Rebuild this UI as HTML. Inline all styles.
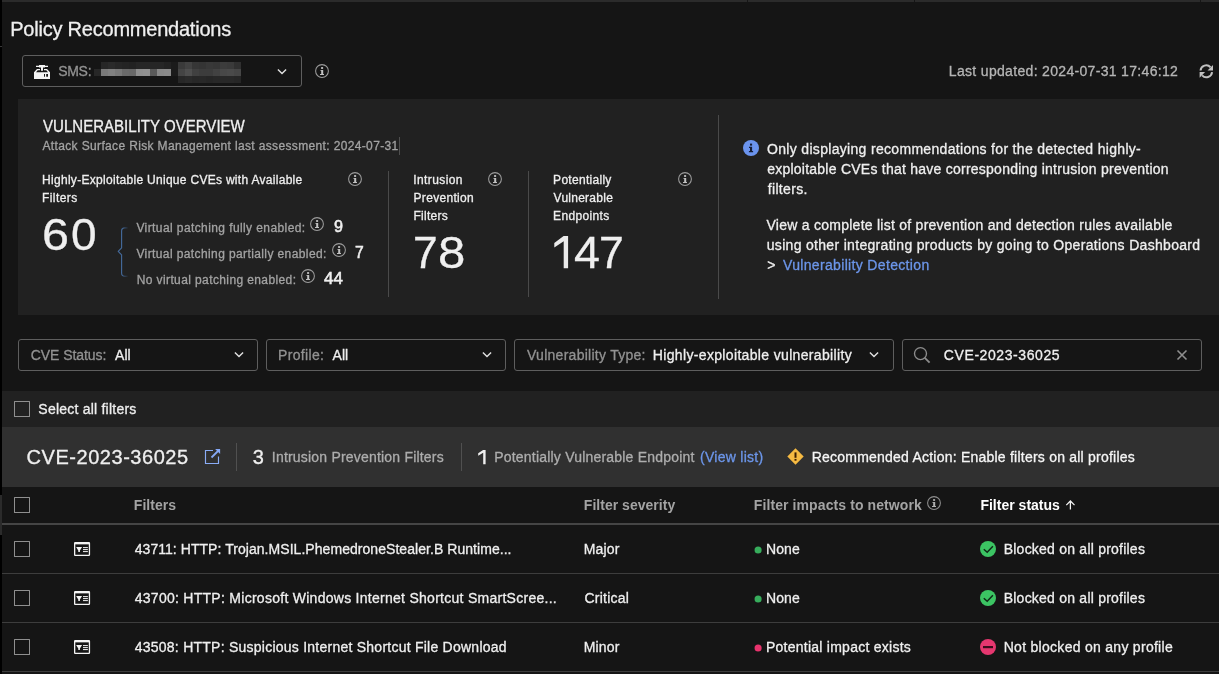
<!DOCTYPE html>
<html lang="en"><head><meta charset="utf-8"><title>Policy Recommendations</title>
<style>
html,body{margin:0;padding:0;}
body{width:1219px;height:674px;overflow:hidden;position:relative;background:#151515;font-family:"Liberation Sans",sans-serif;color:#ebebeb;}
.a{position:absolute;}
.t{position:absolute;white-space:nowrap;margin:0;padding:0;font-weight:400;}
.box{position:absolute;box-sizing:border-box;border:1px solid #5e5e5e;border-radius:3px;height:32px;}
.cb{position:absolute;box-sizing:border-box;width:16px;height:16px;border:1px solid #8f8f8f;border-radius:0.5px;left:14px;}
.vd{position:absolute;width:1px;background:#4a4a4a;}
.hl{position:absolute;left:2px;right:0;height:1px;background:#3d3d3d;}
svg{position:absolute;overflow:visible;}
.tl{position:absolute;left:0;top:0;width:1219px;height:674px;will-change:transform;-webkit-text-stroke:0.3px currentColor;}
</style></head>
<body>
<!-- window chrome strips -->
<div class="a" style="left:0;top:0;width:2px;height:674px;background:#000"></div>
<div class="a" style="left:0;top:495px;width:2px;height:40px;background:#2b2b2b"></div>
<div class="a" style="left:0;top:46px;width:2px;height:1px;background:#3a3a3a"></div>
<div class="a" style="left:2px;top:0;right:0;height:2px;background:#2b2b2b"></div>
<div class="a" style="left:747px;top:0;width:1px;height:2px;background:#161616"></div>
<div class="a" style="left:914px;top:0;width:1px;height:2px;background:#161616"></div>
<div class="a" style="left:1200px;top:0;width:1px;height:2px;background:#161616"></div>
<!-- header: SMS selector, info, refresh -->
<div class="box" style="left:22px;top:55px;width:280px;"></div>
<svg class="a" style="left:34px;top:65px" width="16" height="14" viewBox="0 0 16 14"><path d="M0 7.3L3 4H6V5.2H3.7L2 7.2H14L12.3 5.2H10V4H13L16 7.3V14H0Z" fill="#f4f4f4"/><path d="M2 0.8H5V0H11V0.8H14V2H11V2.6H9V5.8H7V2.6H5V2H2Z" fill="#f4f4f4"/><rect x="10" y="9" width="1" height="2.7" fill="#151515"/><rect x="12.2" y="9" width="1.8" height="2.7" fill="#151515"/></svg>
<div class="a" style="left:101px;top:62px;width:7px;height:7px;background:#262626"></div><div class="a" style="left:108px;top:62px;width:7px;height:7px;background:#2a2a2a"></div><div class="a" style="left:115px;top:62px;width:7px;height:7px;background:#262626"></div><div class="a" style="left:122px;top:62px;width:7px;height:7px;background:#242424"></div><div class="a" style="left:129px;top:62px;width:7px;height:7px;background:#222"></div><div class="a" style="left:136px;top:62px;width:7px;height:7px;background:#262626"></div><div class="a" style="left:143px;top:62px;width:7px;height:7px;background:#262626"></div><div class="a" style="left:150px;top:62px;width:7px;height:7px;background:#262626"></div><div class="a" style="left:157px;top:62px;width:7px;height:7px;background:#262626"></div><div class="a" style="left:164px;top:62px;width:7px;height:7px;background:#222"></div><div class="a" style="left:101px;top:69px;width:7px;height:7px;background:#7a7a7a"></div><div class="a" style="left:108px;top:69px;width:7px;height:7px;background:#808080"></div><div class="a" style="left:115px;top:69px;width:7px;height:7px;background:#787878"></div><div class="a" style="left:122px;top:69px;width:7px;height:7px;background:#6a6a6a"></div><div class="a" style="left:129px;top:69px;width:7px;height:7px;background:#686868"></div><div class="a" style="left:136px;top:69px;width:7px;height:7px;background:#8e8e8e"></div><div class="a" style="left:143px;top:69px;width:7px;height:7px;background:#909090"></div><div class="a" style="left:150px;top:69px;width:7px;height:7px;background:#5a5a5a"></div><div class="a" style="left:157px;top:69px;width:7px;height:7px;background:#888"></div><div class="a" style="left:164px;top:69px;width:7px;height:7px;background:#8a8a8a"></div><div class="a" style="left:94px;top:69px;width:7px;height:7px;background:#272727"></div><div class="a" style="left:171px;top:62px;width:7px;height:14px;background:#1b1b1b"></div><div class="a" style="left:178px;top:62px;width:7px;height:7px;background:#3a3a3a"></div><div class="a" style="left:185px;top:62px;width:7px;height:7px;background:#424242"></div><div class="a" style="left:192px;top:62px;width:7px;height:7px;background:#363636"></div><div class="a" style="left:199px;top:62px;width:7px;height:7px;background:#343434"></div><div class="a" style="left:206px;top:62px;width:7px;height:7px;background:#383838"></div><div class="a" style="left:213px;top:62px;width:7px;height:7px;background:#363636"></div><div class="a" style="left:220px;top:62px;width:7px;height:7px;background:#3c3c3c"></div><div class="a" style="left:227px;top:62px;width:7px;height:7px;background:#3a3a3a"></div><div class="a" style="left:234px;top:62px;width:7px;height:7px;background:#303030"></div><div class="a" style="left:178px;top:69px;width:7px;height:7px;background:#444"></div><div class="a" style="left:185px;top:69px;width:7px;height:7px;background:#4e4e4e"></div><div class="a" style="left:192px;top:69px;width:7px;height:7px;background:#404040"></div><div class="a" style="left:199px;top:69px;width:7px;height:7px;background:#3c3c3c"></div><div class="a" style="left:206px;top:69px;width:7px;height:7px;background:#3c3c3c"></div><div class="a" style="left:213px;top:69px;width:7px;height:7px;background:#424242"></div><div class="a" style="left:220px;top:69px;width:7px;height:7px;background:#484848"></div><div class="a" style="left:227px;top:69px;width:7px;height:7px;background:#4a4a4a"></div><div class="a" style="left:234px;top:69px;width:7px;height:7px;background:#464646"></div><div class="a" style="left:178px;top:76px;width:7px;height:7px;background:#272727"></div><div class="a" style="left:185px;top:76px;width:7px;height:7px;background:#2a2a2a"></div><div class="a" style="left:192px;top:76px;width:7px;height:7px;background:#272727"></div><div class="a" style="left:199px;top:76px;width:7px;height:7px;background:#282828"></div><div class="a" style="left:206px;top:76px;width:7px;height:7px;background:#262626"></div><div class="a" style="left:213px;top:76px;width:7px;height:7px;background:#282828"></div><div class="a" style="left:220px;top:76px;width:7px;height:7px;background:#282828"></div><div class="a" style="left:227px;top:76px;width:7px;height:7px;background:#282828"></div><div class="a" style="left:234px;top:76px;width:7px;height:7px;background:#262626"></div>
<svg class="a" style="left:276.3px;top:67.9px" width="12" height="8" viewBox="0 0 12 8"><path d="M1.9 1.5L6 5.6L10.1 1.5" fill="none" stroke="#e0e0e0" stroke-width="1.4"/></svg>
<svg class="a" style="left:315px;top:64px" width="14" height="14" viewBox="0 0 14 14"><circle cx="7" cy="7" r="6.4" fill="none" stroke="#9c9c9c" stroke-width="1.05"/><rect x="6.1" y="3.1" width="2" height="1.8" fill="#c2c2c2"/><path d="M5.4 5.9H8.2V10H9V11H5V10H6.2V6.8H5.4Z" fill="#c2c2c2"/></svg>
<svg class="a" style="left:1199px;top:64px" width="14.6" height="14.6" viewBox="0 0 14.6 14.6"><path d="M1.5 6.5A5.8 5.8 0 0 1 11.5 3.2" fill="none" stroke="#c0c0c0" stroke-width="2"/><path d="M14 0.9V6.6H8.5Z" fill="#c0c0c0"/><path d="M13.1 8.1A5.8 5.8 0 0 1 3.1 11.4" fill="none" stroke="#c0c0c0" stroke-width="2"/><path d="M0.6 13.7V8H6.1Z" fill="#c0c0c0"/></svg>
<!-- vulnerability overview panel -->
<div class="a" style="left:18px;top:99px;right:0;height:216px;background:#212121"></div>
<div class="a hc" style="left:399px;top:137px;width:1px;height:18px;background:#4f4f4f"></div>
<div class="vd" style="left:388px;top:171px;height:126px"></div>
<div class="vd" style="left:528px;top:171px;height:126px"></div>
<div class="vd" style="left:718px;top:115px;height:184px"></div>
<svg class="a" style="left:347.7px;top:172.3px" width="14" height="14" viewBox="0 0 14 14"><circle cx="7" cy="7" r="6.4" fill="none" stroke="#9c9c9c" stroke-width="1.05"/><rect x="6.1" y="3.1" width="2" height="1.8" fill="#c2c2c2"/><path d="M5.4 5.9H8.2V10H9V11H5V10H6.2V6.8H5.4Z" fill="#c2c2c2"/></svg>
<svg class="a" style="left:487.8px;top:172.3px" width="14" height="14" viewBox="0 0 14 14"><circle cx="7" cy="7" r="6.4" fill="none" stroke="#9c9c9c" stroke-width="1.05"/><rect x="6.1" y="3.1" width="2" height="1.8" fill="#c2c2c2"/><path d="M5.4 5.9H8.2V10H9V11H5V10H6.2V6.8H5.4Z" fill="#c2c2c2"/></svg>
<svg class="a" style="left:677.9px;top:172.3px" width="14" height="14" viewBox="0 0 14 14"><circle cx="7" cy="7" r="6.4" fill="none" stroke="#9c9c9c" stroke-width="1.05"/><rect x="6.1" y="3.1" width="2" height="1.8" fill="#c2c2c2"/><path d="M5.4 5.9H8.2V10H9V11H5V10H6.2V6.8H5.4Z" fill="#c2c2c2"/></svg>
<svg class="a" style="left:309.8px;top:217.2px" width="14" height="14" viewBox="0 0 14 14"><circle cx="7" cy="7" r="6.4" fill="none" stroke="#9c9c9c" stroke-width="1.05"/><rect x="6.1" y="3.1" width="2" height="1.8" fill="#c2c2c2"/><path d="M5.4 5.9H8.2V10H9V11H5V10H6.2V6.8H5.4Z" fill="#c2c2c2"/></svg>
<svg class="a" style="left:332px;top:243px" width="14" height="14" viewBox="0 0 14 14"><circle cx="7" cy="7" r="6.4" fill="none" stroke="#9c9c9c" stroke-width="1.05"/><rect x="6.1" y="3.1" width="2" height="1.8" fill="#c2c2c2"/><path d="M5.4 5.9H8.2V10H9V11H5V10H6.2V6.8H5.4Z" fill="#c2c2c2"/></svg>
<svg class="a" style="left:300.7px;top:268.8px" width="14" height="14" viewBox="0 0 14 14"><circle cx="7" cy="7" r="6.4" fill="none" stroke="#9c9c9c" stroke-width="1.05"/><rect x="6.1" y="3.1" width="2" height="1.8" fill="#c2c2c2"/><path d="M5.4 5.9H8.2V10H9V11H5V10H6.2V6.8H5.4Z" fill="#c2c2c2"/></svg>
<svg class="a" style="left:117px;top:227px" width="12" height="50" viewBox="0 0 12 50"><defs><linearGradient id="bg" gradientUnits="userSpaceOnUse" x1="5" y1="0" x2="11" y2="0"><stop offset="0" stop-color="#43699a"/><stop offset="1" stop-color="#43699a" stop-opacity="0.1"/></linearGradient></defs><path d="M10.8 0.9H7.8Q4.6 0.9 4.6 4V20.8L1.2 24.3L4.6 27.8V46Q4.6 49.2 7.8 49.2H10.8" fill="none" stroke="url(#bg)" stroke-width="1.15" stroke-linejoin="round"/></svg>
<svg class="a" style="left:554.3px;top:235.9px" width="15" height="33" viewBox="0 0 15 33"><path d="M9.6 0H14.1V32.2H9.7V5.2L0.3 11.4V7Z" fill="#ebebeb"/></svg>
<svg class="a" style="left:742.6px;top:139.5px" width="16" height="16" viewBox="0 0 16 16"><circle cx="8" cy="8" r="8" fill="#6b94ee"/><rect x="7" y="3.6" width="2.1" height="2" fill="#151c33"/><path d="M6 6.8H9.1V11H10.1V12.2H5.9V11H7V8H6Z" fill="#151c33"/></svg>
<!-- filter bar -->
<div class="box" style="left:18px;top:339px;width:240px;"></div>
<div class="box" style="left:266px;top:339px;width:240px;"></div>
<div class="box" style="left:514px;top:339px;width:380px;"></div>
<div class="box" style="left:902px;top:339px;width:300px;"></div>
<svg class="a" style="left:232.5px;top:351px" width="12" height="8" viewBox="0 0 12 8"><path d="M1.9 1.5L6 5.6L10.1 1.5" fill="none" stroke="#e0e0e0" stroke-width="1.4"/></svg>
<svg class="a" style="left:480.5px;top:351px" width="12" height="8" viewBox="0 0 12 8"><path d="M1.9 1.5L6 5.6L10.1 1.5" fill="none" stroke="#e0e0e0" stroke-width="1.4"/></svg>
<svg class="a" style="left:867.5px;top:351px" width="12" height="8" viewBox="0 0 12 8"><path d="M1.9 1.5L6 5.6L10.1 1.5" fill="none" stroke="#e0e0e0" stroke-width="1.4"/></svg>
<svg class="a" style="left:913px;top:346px" width="18" height="18" viewBox="0 0 18 18"><circle cx="7.5" cy="7.6" r="6" fill="none" stroke="#8c8c8c" stroke-width="1.35"/><path d="M11.8 11.9L16.6 16.7" stroke="#8c8c8c" stroke-width="1.8"/></svg>
<svg class="a" style="left:1177px;top:350px" width="10" height="10" viewBox="0 0 10 10"><path d="M0.5 0.5L9.5 9.5M9.5 0.5L0.5 9.5" stroke="#8f8f8f" stroke-width="1.6"/></svg>
<!-- select-all row and CVE group header -->
<div class="a" style="left:2px;top:391px;right:0;height:36px;background:#212121"></div>
<div class="cb" style="top:401px;"></div>
<div class="a" style="left:2px;top:427px;right:0;height:60px;background:#303030"></div>
<svg class="a" style="left:204px;top:448px" width="17" height="17" viewBox="0 0 17 17"><path d="M9 2.5H1.5V15.5H14.5V8.5" fill="none" stroke="#8aacf6" stroke-width="1.15"/><path d="M7.5 9.5L14.5 2.5" stroke="#86a9f7" stroke-width="1.8"/><path d="M11.1 1H16.1V6Z" fill="#86a9f7"/></svg>
<div class="vd" style="left:236px;top:443px;height:28px;background:#505050"></div>
<div class="vd" style="left:461px;top:443px;height:28px;background:#505050"></div>
<svg class="a" style="left:787.1px;top:448px" width="17" height="17" viewBox="0 0 17 17"><path d="M8.5 0.3L16.7 8.5L8.5 16.7L0.3 8.5Z" fill="#f6ba42"/><rect x="7.5" y="4.4" width="2" height="5.4" fill="#3d1f00"/><rect x="7.5" y="10.9" width="2" height="1.8" fill="#3d1f00"/></svg>
<svg class="a" style="left:478px;top:449.6px" width="8" height="15" viewBox="0 0 8 15"><path d="M5.1 0H7.6V14.3H5.2V2.7L0.2 5.8V3.3Z" fill="#efefef"/></svg>
<!-- filters table -->
<div class="cb" style="top:497px;"></div>
<div class="a" style="left:2px;top:523px;right:0;height:2px;background:#454545"></div>
<svg class="a" style="left:927px;top:496px" width="14" height="14" viewBox="0 0 14 14"><circle cx="7" cy="7" r="6.4" fill="none" stroke="#8e8e8e" stroke-width="1.05"/><rect x="6.1" y="3.1" width="2" height="1.8" fill="#b0b0b0"/><path d="M5.4 5.9H8.2V10H9V11H5V10H6.2V6.8H5.4Z" fill="#b0b0b0"/></svg>
<svg class="a" style="left:1064px;top:498px" width="12" height="13" viewBox="0 0 12 13"><path d="M6.4 11.6V3.2M2.3 7.1L6.4 3L10.5 7.1" fill="none" stroke="#f2f2f2" stroke-width="1.25"/></svg>
<div class="cb" style="top:541px;"></div>
<svg class="a" style="left:73.8px;top:542px" width="16.1" height="14" viewBox="0 0 16.1 14"><rect x="0.65" y="0.65" width="14.8" height="12.7" rx="0.6" fill="none" stroke="#f4f4f4" stroke-width="1.3"/><rect x="0.65" y="0.65" width="14.8" height="1.7" fill="#f4f4f4"/><path d="M2.1 5H8.1L5.9 8.5V10H4.3V8.5Z" fill="#f4f4f4"/><path d="M9 5.6H13.9M9 7.6H13.9M9 9.6H13.9" stroke="#f4f4f4" stroke-width="1"/></svg>
<div class="hl" style="top:573px"></div>
<svg class="a" style="left:754px;top:546px" width="8" height="8" viewBox="0 0 8 8"><circle cx="4.1" cy="4" r="3.55" fill="#37ad5c"/></svg>
<svg class="a" style="left:980px;top:541px" width="16" height="16" viewBox="0 0 16 16"><circle cx="8" cy="8" r="8" fill="#3cc463"/><path d="M3.8 8.2L7.2 11.3L12.9 5.3" fill="none" stroke="#0f2a18" stroke-width="1.5"/></svg>
<div class="cb" style="top:590px;"></div>
<svg class="a" style="left:73.8px;top:591px" width="16.1" height="14" viewBox="0 0 16.1 14"><rect x="0.65" y="0.65" width="14.8" height="12.7" rx="0.6" fill="none" stroke="#f4f4f4" stroke-width="1.3"/><rect x="0.65" y="0.65" width="14.8" height="1.7" fill="#f4f4f4"/><path d="M2.1 5H8.1L5.9 8.5V10H4.3V8.5Z" fill="#f4f4f4"/><path d="M9 5.6H13.9M9 7.6H13.9M9 9.6H13.9" stroke="#f4f4f4" stroke-width="1"/></svg>
<div class="hl" style="top:622px"></div>
<svg class="a" style="left:754px;top:595px" width="8" height="8" viewBox="0 0 8 8"><circle cx="4.1" cy="4" r="3.55" fill="#37ad5c"/></svg>
<svg class="a" style="left:980px;top:590px" width="16" height="16" viewBox="0 0 16 16"><circle cx="8" cy="8" r="8" fill="#3cc463"/><path d="M3.8 8.2L7.2 11.3L12.9 5.3" fill="none" stroke="#0f2a18" stroke-width="1.5"/></svg>
<div class="cb" style="top:639px;"></div>
<svg class="a" style="left:73.8px;top:640px" width="16.1" height="14" viewBox="0 0 16.1 14"><rect x="0.65" y="0.65" width="14.8" height="12.7" rx="0.6" fill="none" stroke="#f4f4f4" stroke-width="1.3"/><rect x="0.65" y="0.65" width="14.8" height="1.7" fill="#f4f4f4"/><path d="M2.1 5H8.1L5.9 8.5V10H4.3V8.5Z" fill="#f4f4f4"/><path d="M9 5.6H13.9M9 7.6H13.9M9 9.6H13.9" stroke="#f4f4f4" stroke-width="1"/></svg>
<div class="hl" style="top:671px"></div>
<svg class="a" style="left:754px;top:644px" width="8" height="8" viewBox="0 0 8 8"><circle cx="4.1" cy="4" r="3.55" fill="#e8336d"/></svg>
<svg class="a" style="left:980px;top:639px" width="16" height="16" viewBox="0 0 16 16"><circle cx="8" cy="8" r="8" fill="#e5376f"/><rect x="3" y="7" width="10" height="2.2" fill="#3a0d1c"/></svg>

<!-- text layer -->
<div class="tl">
<h1 class="t" style="left:10.25px;top:15px;font-size:20px;line-height:28px;color:#efefef;letter-spacing:-0.224px;">Policy Recommendations</h1>
<span class="t" style="left:58.20px;top:61px;font-size:14px;line-height:20px;color:#929292;letter-spacing:-0.297px;">SMS:</span>
<span class="t" style="left:948.84px;top:61px;font-size:14px;line-height:20px;color:#b5b5b5;letter-spacing:0.322px;">Last updated: 2024-07-31 17:46:12</span>
<h2 class="t" style="left:42.50px;top:116px;font-size:16px;line-height:22px;color:#efefef;transform:scaleX(0.9404);transform-origin:0 0;">VULNERABILITY OVERVIEW</h2>
<span class="t" style="left:42.49px;top:138px;font-size:12px;line-height:17px;color:#a3a3a3;letter-spacing:0.355px;">Attack Surface Risk Management last assessment: 2024-07-31</span>
<span class="t" style="left:42.02px;top:172px;font-size:12px;line-height:17px;color:#efefef;letter-spacing:0.295px;">Highly-Exploitable Unique CVEs with Available</span>
<span class="t" style="left:42.02px;top:190px;font-size:12px;line-height:17px;color:#efefef;letter-spacing:0.409px;">Filters</span>
<span class="t" style="left:42.15px;top:203px;font-size:45px;line-height:63px;color:#efefef;transform:scaleX(1.0761);transform-origin:0 0;">6</span>
<span class="t" style="left:70.58px;top:203px;font-size:45px;line-height:63px;color:#efefef;transform:scaleX(1.0213);transform-origin:0 0;">0</span>
<span class="t" style="left:412.93px;top:221px;font-size:45px;line-height:63px;color:#efefef;transform:scaleX(0.9857);transform-origin:0 0;">7</span>
<span class="t" style="left:437.62px;top:221px;font-size:45px;line-height:63px;color:#efefef;transform:scaleX(1.0910);transform-origin:0 0;">8</span>
<span class="t" style="left:573.79px;top:221px;font-size:45px;line-height:63px;color:#efefef;transform:scaleX(1.0379);transform-origin:0 0;">4</span>
<span class="t" style="left:599.32px;top:221px;font-size:45px;line-height:63px;color:#efefef;transform:scaleX(0.9905);transform-origin:0 0;">7</span>
<span class="t" style="left:136.43px;top:220px;font-size:12px;line-height:17px;color:#a3a3a3;letter-spacing:0.406px;">Virtual patching fully enabled:</span>
<span class="t" style="left:136.43px;top:246px;font-size:12px;line-height:17px;color:#a3a3a3;letter-spacing:0.393px;">Virtual patching partially enabled:</span>
<span class="t" style="left:136.72px;top:272px;font-size:12px;line-height:17px;color:#a3a3a3;letter-spacing:0.390px;">No virtual patching enabled:</span>
<span class="t" style="left:333.87px;top:216px;font-size:16px;line-height:22px;color:#efefef;transform:scaleX(1.0112);transform-origin:0 0;-webkit-text-stroke:0.55px currentColor;">9</span>
<span class="t" style="left:354.86px;top:242px;font-size:16px;line-height:22px;color:#efefef;transform:scaleX(0.9795);transform-origin:0 0;-webkit-text-stroke:0.55px currentColor;">7</span>
<span class="t" style="left:324.40px;top:268px;font-size:16px;line-height:22px;color:#efefef;transform:scaleX(1.0539);transform-origin:0 0;-webkit-text-stroke:0.55px currentColor;">44</span>
<span class="t" style="left:413.37px;top:172px;font-size:12px;line-height:17px;color:#efefef;letter-spacing:0.377px;">Intrusion</span>
<span class="t" style="left:413.55px;top:190px;font-size:12px;line-height:17px;color:#efefef;letter-spacing:0.302px;">Prevention</span>
<span class="t" style="left:413.55px;top:208px;font-size:12px;line-height:17px;color:#efefef;letter-spacing:0.243px;">Filters</span>
<span class="t" style="left:553.10px;top:172px;font-size:12px;line-height:17px;color:#efefef;letter-spacing:0.291px;">Potentially</span>
<span class="t" style="left:553.60px;top:190px;font-size:12px;line-height:17px;color:#efefef;letter-spacing:0.253px;">Vulnerable</span>
<span class="t" style="left:553.10px;top:208px;font-size:12px;line-height:17px;color:#efefef;letter-spacing:0.346px;">Endpoints</span>
<span class="t" style="left:767.05px;top:139px;font-size:14px;line-height:20px;color:#efefef;letter-spacing:0.315px;">Only displaying recommendations for the detected highly-</span>
<span class="t" style="left:767.14px;top:159px;font-size:14px;line-height:20px;color:#efefef;letter-spacing:0.244px;">exploitable CVEs that have corresponding intrusion prevention</span>
<span class="t" style="left:767.73px;top:179px;font-size:14px;line-height:20px;color:#efefef;letter-spacing:0.331px;">filters.</span>
<span class="t" style="left:766.52px;top:215px;font-size:14px;line-height:20px;color:#efefef;letter-spacing:0.257px;">View a complete list of prevention and detection rules available</span>
<span class="t" style="left:766.73px;top:235px;font-size:14px;line-height:20px;color:#efefef;letter-spacing:0.315px;">using other integrating products by going to Operations Dashboard</span>
<span class="t" style="left:767.35px;top:255px;font-size:14px;line-height:20px;color:#efefef;">&gt;</span>
<span class="t" style="left:783.03px;top:255px;font-size:14px;line-height:20px;color:#6c96ea;letter-spacing:0.335px;">Vulnerability Detection</span>
<span class="t" style="left:30.81px;top:345px;font-size:14px;line-height:20px;color:#929292;letter-spacing:-0.075px;">CVE Status:</span>
<span class="t" style="left:114.98px;top:345px;font-size:14px;line-height:20px;color:#efefef;letter-spacing:0.093px;">All</span>
<span class="t" style="left:277.99px;top:345px;font-size:14px;line-height:20px;color:#929292;letter-spacing:0.347px;">Profile:</span>
<span class="t" style="left:332.59px;top:345px;font-size:14px;line-height:20px;color:#efefef;letter-spacing:0.010px;">All</span>
<span class="t" style="left:527.03px;top:345px;font-size:14px;line-height:20px;color:#929292;letter-spacing:0.269px;">Vulnerability Type:</span>
<span class="t" style="left:652.83px;top:345px;font-size:14px;line-height:20px;color:#efefef;letter-spacing:0.340px;">Highly-exploitable vulnerability</span>
<span class="t" style="left:943.86px;top:345px;font-size:14px;line-height:20px;color:#efefef;letter-spacing:0.577px;">CVE-2023-36025</span>
<span class="t" style="left:38.32px;top:399px;font-size:14px;line-height:20px;color:#efefef;letter-spacing:0.227px;">Select all filters</span>
<h3 class="t" style="left:26.59px;top:443px;font-size:20px;line-height:28px;color:#efefef;letter-spacing:0.535px;">CVE-2023-36025</h3>
<span class="t" style="left:252.85px;top:443px;font-size:20px;line-height:28px;color:#efefef;">3</span>
<span class="t" style="left:271.83px;top:447px;font-size:14px;line-height:20px;color:#adadad;letter-spacing:0.198px;">Intrusion Prevention Filters</span>
<span class="t" style="left:494.25px;top:447px;font-size:14px;line-height:20px;color:#adadad;letter-spacing:0.202px;">Potentially Vulnerable Endpoint</span>
<span class="t" style="left:700.06px;top:447px;font-size:14px;line-height:20px;color:#6c96ea;letter-spacing:0.267px;">(View list)</span>
<span class="t" style="left:811.66px;top:447px;font-size:14px;line-height:20px;color:#f5f5f5;letter-spacing:0.226px;">Recommended Action: Enable filters on all profiles</span>
<span class="t" style="left:133.83px;top:495px;font-size:14px;line-height:20px;color:#a3a3a3;letter-spacing:0.047px;font-weight:700;-webkit-text-stroke:0;">Filters</span>
<span class="t" style="left:583.83px;top:495px;font-size:14px;line-height:20px;color:#a3a3a3;letter-spacing:0.023px;font-weight:700;-webkit-text-stroke:0;">Filter severity</span>
<span class="t" style="left:753.83px;top:495px;font-size:14px;line-height:20px;color:#a3a3a3;letter-spacing:0.092px;font-weight:700;-webkit-text-stroke:0;">Filter impacts to network</span>
<span class="t" style="left:980.40px;top:495px;font-size:14px;line-height:20px;color:#ffffff;letter-spacing:0.011px;font-weight:700;-webkit-text-stroke:0;">Filter status</span>
<span class="t" style="left:134.73px;top:539px;font-size:14px;line-height:20px;color:#efefef;letter-spacing:0.051px;">43711: HTTP: Trojan.MSIL.PhemedroneStealer.B Runtime...</span>
<span class="t" style="left:134.73px;top:588px;font-size:14px;line-height:20px;color:#efefef;letter-spacing:0.273px;">43700: HTTP: Microsoft Windows Internet Shortcut SmartScree...</span>
<span class="t" style="left:134.73px;top:637px;font-size:14px;line-height:20px;color:#efefef;letter-spacing:0.243px;">43508: HTTP: Suspicious Internet Shortcut File Download</span>
<span class="t" style="left:583.83px;top:539px;font-size:14px;line-height:20px;color:#efefef;letter-spacing:0.114px;">Major</span>
<span class="t" style="left:584.40px;top:588px;font-size:14px;line-height:20px;color:#efefef;letter-spacing:0.253px;">Critical</span>
<span class="t" style="left:583.83px;top:637px;font-size:14px;line-height:20px;color:#efefef;letter-spacing:0.114px;">Minor</span>
<span class="t" style="left:765.92px;top:539px;font-size:14px;line-height:20px;color:#efefef;letter-spacing:0.119px;">None</span>
<span class="t" style="left:765.92px;top:588px;font-size:14px;line-height:20px;color:#efefef;letter-spacing:0.119px;">None</span>
<span class="t" style="left:765.92px;top:637px;font-size:14px;line-height:20px;color:#efefef;letter-spacing:0.254px;">Potential impact exists</span>
<span class="t" style="left:1003.73px;top:539px;font-size:14px;line-height:20px;color:#efefef;letter-spacing:0.226px;">Blocked on all profiles</span>
<span class="t" style="left:1003.73px;top:588px;font-size:14px;line-height:20px;color:#efefef;letter-spacing:0.226px;">Blocked on all profiles</span>
<span class="t" style="left:1003.73px;top:637px;font-size:14px;line-height:20px;color:#efefef;letter-spacing:0.284px;">Not blocked on any profile</span>
</div>
</body></html>
